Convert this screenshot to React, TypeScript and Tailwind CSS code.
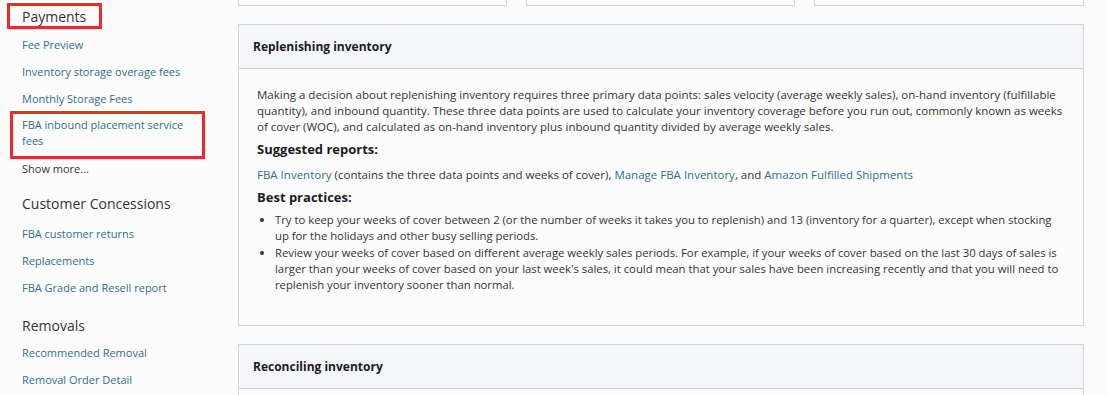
import React from "react";

const link = "text-[#2f6f89]";

function SideLink({ children }: { children: React.ReactNode }) {
  return <div className={`${link} text-[11px] leading-[15px] h-[27px] flex items-center pl-[22px]`}>{children}</div>;
}

function SideHead({ children }: { children: React.ReactNode }) {
  return <div className="text-[#333] text-[14px] leading-[20px] pl-[22px]">{children}</div>;
}

export default function App() {
  return (
    <div className="w-[1107px] h-[395px] overflow-hidden bg-[#fdfcfd] flex" style={{ fontFamily: '"Open Sans", "Noto Sans", sans-serif' }}>
      <div className="w-[238px] shrink-0 pt-[3px]">
        <div className="ml-[7px] w-[95px] h-[26px] border-[3px] border-[#ee2a2a] flex items-center pl-[12px] text-[#333] text-[14px]">Payments</div>
        <div className="mt-[2px]">
          <SideLink>Fee Preview</SideLink>
          <SideLink>Inventory storage overage fees</SideLink>
          <SideLink>Monthly Storage Fees</SideLink>
        </div>
        <div className="ml-[10px] w-[195px] h-[48px] border-[3px] border-[#ee2a2a] pl-[9px] pt-[3px] mt-[-1px] text-[11px] leading-[16px] text-[#2f6f89]">
          FBA inbound placement service
          <br />
          fees
        </div>
        <div className="pl-[22px] text-[11px] text-[#333] h-[20px] flex items-center">Show more...</div>
        <div className="mt-[15px]"><SideHead>Customer Concessions</SideHead></div>
        <div className="mt-[6px]">
          <SideLink>FBA customer returns</SideLink>
          <SideLink>Replacements</SideLink>
          <SideLink>FBA Grade and Resell report</SideLink>
        </div>
        <div className="mt-[15px]"><SideHead>Removals</SideHead></div>
        <div className="mt-[3px]">
          <SideLink>Recommended Removal</SideLink>
          <SideLink>Removal Order Detail</SideLink>
        </div>
      </div>

      <div className="w-[846px] shrink-0">
        <div className="flex gap-[19px]">
          <div className="w-[269px] h-[6px] border border-t-0 border-[#d5d4d8]" />
          <div className="w-[269px] h-[6px] border border-t-0 border-[#d5d4d8]" />
          <div className="w-[270px] h-[6px] border border-t-0 border-[#d5d4d8]" />
        </div>

        <div className="mt-[18px] border border-[#d5d4d8] h-[302px]">
          <div className="h-[44px] bg-[#f5f6fa] border-b border-[#d5d4d8] flex items-center pl-[14px] text-[12px] font-bold text-[#1b1b1b]">Replenishing inventory</div>
          <div className="pl-[18px] pr-[20px] pt-[18px] text-[11.5px] leading-[16px] text-[#333]">
            <p>
              Making a decision about replenishing inventory requires three primary data points: sales velocity (average weekly sales), on-hand inventory (fulfillable quantity), and inbound quantity. These three data points are used to calculate your inventory coverage before you run out, commonly known as weeks of cover (WOC), and calculated as on-hand inventory plus inbound quantity divided by average weekly sales.
            </p>
            <div className="font-bold text-[13px] leading-[18px] mt-[5px] text-[#1b1b1b]">Suggested reports:</div>
            <p className="mt-[9px]">
              <span className={link}>FBA Inventory</span> (contains the three data points and weeks of cover), <span className={link}>Manage FBA Inventory</span>, and <span className={link}>Amazon Fulfilled Shipments</span>
            </p>
            <div className="font-bold text-[13px] leading-[18px] mt-[5px] text-[#1b1b1b]">Best practices:</div>
            <ul className="list-disc pl-[18px] mr-[-4px] mt-[6px] text-[11.3px] leading-[16.3px]">
              <li>Try to keep your weeks of cover between 2 (or the number of weeks it takes you to replenish) and 13 (inventory for a quarter), except when stocking up for the holidays and other busy selling periods.</li>
              <li>Review your weeks of cover based on different average weekly sales periods. For example, if your weeks of cover based on the last 30 days of sales is larger than your weeks of cover based on your last week's sales, it could mean that your sales have been increasing recently and that you will need to replenish your inventory sooner than normal.</li>
            </ul>
          </div>
        </div>

        <div className="mt-[18px] border border-[#d5d4d8] h-[80px]">
          <div className="h-[44px] bg-[#f5f6fa] border-b border-[#d5d4d8] flex items-center pl-[14px] text-[12px] font-bold text-[#1b1b1b]">Reconciling inventory</div>
        </div>
      </div>
    </div>
  );
}
